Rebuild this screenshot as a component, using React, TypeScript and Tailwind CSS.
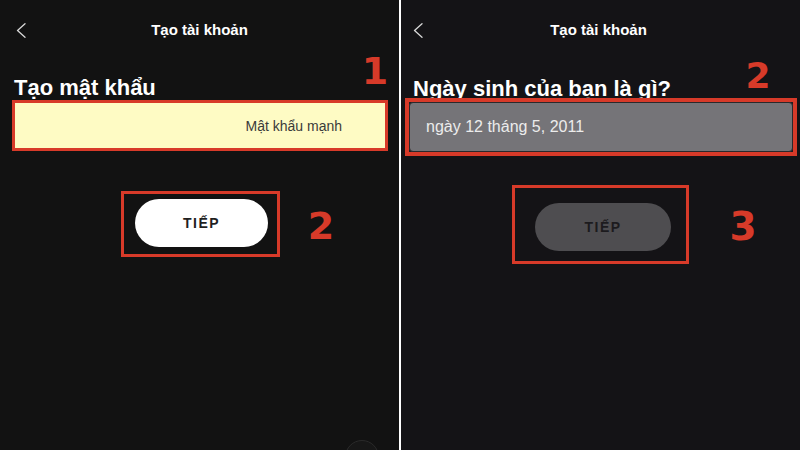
import React from "react";

const RED = "border-[#d73a29]";

function Chevron() {
  return (
    <svg width="10" height="15" viewBox="0 0 10 15" fill="none" className="shrink-0">
      <polyline points="9,0.8 1.5,7.5 9,14.2" stroke="#d8d8d8" strokeWidth="1.3" strokeLinecap="round" strokeLinejoin="round" />
    </svg>
  );
}

function Header({ padLeft }: { padLeft: string }) {
  return (
    <div className={`flex h-[60px] items-center ${padLeft} pr-[16px]`}>
      <Chevron />
      <div className="flex-1 text-center text-[15px] font-bold leading-[18px] text-white">Tạo tài khoản</div>
      <div className="w-[10px]" />
    </div>
  );
}

function Num({ n, className }: { n: string; className: string }) {
  return (
    <span
      className={`absolute w-[40px] text-center font-bold leading-none text-[#d73a29] ${className}`}
      style={{ fontFamily: '"DejaVu Sans", sans-serif' }}
    >
      {n}
    </span>
  );
}

export default function App() {
  return (
    <div className="flex h-[450px] w-[800px] overflow-hidden" style={{ fontFamily: '"Liberation Sans", Arial, sans-serif' }}>
      {/* Left panel */}
      <div className="relative flex h-full w-[399px] flex-col bg-[#121212]">
        <Header padLeft="pl-[16px]" />
        <div className="mt-[16px] pl-[14px] text-[22px] font-bold leading-[24px] text-white">Tạo mật khẩu</div>
        <div className={`relative ml-[12px] flex h-[51px] w-[376px] items-center justify-end border-[3px] ${RED} bg-[#fefbc4] pr-[43px] pt-[2px]`}>
          <span className="text-[14px] text-[#3a3a3a]">Mật khẩu mạnh</span>
        </div>
        <div className={`ml-[121px] mt-[40px] flex h-[66px] w-[159px] items-start border-[3px] ${RED} pl-[11px] pt-[5px]`}>
          <div className="flex h-[48px] w-[133px] items-center justify-center rounded-full bg-white">
            <span className="text-[14px] font-bold tracking-[1.5px] text-[#1f1f1f]">TIẾP</span>
          </div>
        </div>
        <Num n="1" className="left-[355px] top-[52px] text-[38px]" />
        <Num n="2" className="left-[301px] top-[207px] text-[38px]" />
        <div className="absolute left-[345px] top-[440px] h-[34px] w-[34px] rounded-full border border-[#2a2a2a] bg-[#171717]" />
      </div>

      {/* Divider */}
      <div className="h-full w-[2px] bg-white" />

      {/* Right panel */}
      <div className="relative flex h-full flex-1 flex-col bg-[#141316]">
        <Header padLeft="pl-[12px]" />
        <div className="mt-[20px] pl-[12px] text-[22px] font-bold leading-[18px] text-white">Ngày sinh của bạn là gì?</div>
        <div className={`relative ml-[4px] flex h-[58px] w-[392px] border-[4px] ${RED} bg-[#1e1d20]`}>
          <div className="flex flex-1 items-center rounded-[4px] border border-[#2a292c] bg-[#757478] pl-[16px]">
            <span className="text-[16px] text-[#ececec]">ngày 12 tháng 5, 2011</span>
          </div>
        </div>
        <div className={`ml-[111px] mt-[29px] flex h-[79px] w-[177px] items-start border-[3px] ${RED} pl-[20px] pt-[15px]`}>
          <div className="flex h-[48px] w-[136px] items-center justify-center rounded-full bg-[#4e4d50]">
            <span className="text-[14px] font-bold tracking-[1.5px] text-[#1c1b1e]">TIẾP</span>
          </div>
        </div>
        <Num n="2" className="left-[337px] top-[58px] text-[36px]" />
        <Num n="3" className="left-[322px] top-[207px] text-[39px]" />
      </div>
    </div>
  );
}
